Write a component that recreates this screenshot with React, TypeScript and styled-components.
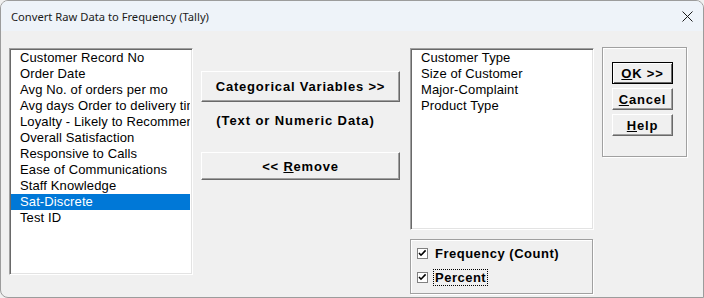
import React from "react";
import styled, { createGlobalStyle } from "styled-components";

const GlobalStyle = createGlobalStyle`
  html, body {
    margin: 0;
    padding: 0;
    background: #f0f0f0;
  }
  * {
    box-sizing: border-box;
  }
`;

const Window = styled.div`
  width: 704px;
  height: 298px;
  border: 1px solid #9c9c9c;
  border-radius: 8px 8px 0 8px;
  background: #f0f0f0;
  overflow: hidden;
  display: flex;
  flex-direction: column;
`;

const TitleBar = styled.div`
  height: 30px;
  flex: none;
  display: flex;
  align-items: center;
  justify-content: space-between;
  padding: 0 10px 0 10px;
  background: #eef3f9;
  font-family: "Noto Sans", "Open Sans", sans-serif;
  font-size: 11.2px;
  color: #1a1a1a;
`;

const Content = styled.div`
  flex: 1;
  display: flex;
  align-items: flex-start;
  padding: 17px 0 0 8px;
  font-family: "Liberation Sans", Arial, sans-serif;
  font-size: 13px;
  color: #000;
`;

const ListBox = styled.div<{ $h: number }>`
  width: 184px;
  height: ${(p) => p.$h}px;
  flex: none;
  background: #fff;
  border-top: 1px solid #a0a0a0;
  border-left: 1px solid #a0a0a0;
  border-bottom: 1px solid #fff;
  border-right: 1px solid #fff;
  box-shadow: inset 1px 1px 0 #696969, inset -1px -1px 0 #e3e3e3;
  padding: 1px 2px 1px 1px;
  overflow: hidden;
`;

const ListItem = styled.div<{ $selected?: boolean }>`
  height: 16px;
  line-height: 16px;
  padding-left: 9px;
  letter-spacing: 0.12px;
  white-space: nowrap;
  overflow: hidden;
  background: ${(p) => (p.$selected ? "#0078d7" : "transparent")};
  color: ${(p) => (p.$selected ? "#fff" : "#000")};
`;

const MiddleColumn = styled.div`
  width: 199px;
  margin-left: 8px;
  padding-top: 23px;
  display: flex;
  flex-direction: column;
  flex: none;
`;

const Button = styled.div<{ $h: number; $default?: boolean }>`
  height: ${(p) => p.$h}px;
  display: flex;
  align-items: center;
  justify-content: center;
  background: #f0f0f0;
  font-weight: bold;
  font-size: 13px;
  letter-spacing: 0.8px;
  border-top: 1px solid ${(p) => (p.$default ? "#000" : "#fff")};
  border-left: 1px solid ${(p) => (p.$default ? "#000" : "#fff")};
  border-bottom: 1px solid ${(p) => (p.$default ? "#000" : "#696969")};
  border-right: 1px solid ${(p) => (p.$default ? "#000" : "#696969")};
  box-shadow: ${(p) =>
    p.$default
      ? "inset 1px 1px 0 #fff, inset -1px -1px 0 #696969"
      : "inset -1px -1px 0 #a0a0a0"};
  white-space: nowrap;
`;

const Note = styled.div`
  font-weight: bold;
  letter-spacing: 0.9px;
  text-align: center;
  line-height: 16px;
  margin: 11px 10px 23px 0;
`;

const RightColumn = styled.div`
  width: 183px;
  margin-left: 10px;
  display: flex;
  flex-direction: column;
  flex: none;
`;

const OptionsBox = styled.div`
  margin-top: 9px;
  height: 55px;
  border: 1px solid #a0a0a0;
  box-shadow: inset 1px 1px 0 #fff, 1px 1px 0 #fff;
  padding: 5px 0 0 6px;
  display: flex;
  flex-direction: column;
  gap: 8px;
`;

const CheckRow = styled.div`
  display: flex;
  align-items: center;
  height: 16px;
  font-weight: bold;
  letter-spacing: 0.5px;
`;

const CheckBox = styled.span`
  width: 11px;
  height: 11px;
  background: #fff;
  border: 1px solid #808080;
  margin-right: 6px;
  display: flex;
  align-items: center;
  justify-content: center;
`;

const Label = styled.span<{ $focus?: boolean }>`
  padding: 0 1px;
  line-height: 15px;
  outline: ${(p) => (p.$focus ? "1px dotted #000" : "none")};
`;

const ButtonBox = styled.div`
  width: 85px;
  height: 110px;
  margin-left: 9px;
  margin-top: -1px;
  flex: none;
  border: 1px solid #a0a0a0;
  box-shadow: inset 1px 1px 0 #fff, 1px 1px 0 #fff;
  padding: 14px 0 0 9px;
  display: flex;
  flex-direction: column;
  gap: 4px;
`;

const SideButton = styled(Button)`
  width: 61px;
`;

const Check = () => (
  <svg width="9" height="9" viewBox="0 0 9 9">
    <path d="M1 4 L3 6.2 L7.6 1.4" fill="none" stroke="#000" strokeWidth="1.6" />
  </svg>
);

const CloseIcon = () => (
  <svg width="11" height="11" viewBox="0 0 11 11">
    <path d="M0.5 0.5 L10.5 10.5 M10.5 0.5 L0.5 10.5" stroke="#1a1a1a" strokeWidth="1" />
  </svg>
);

const sourceVars = [
  "Customer Record No",
  "Order Date",
  "Avg No. of orders per mo",
  "Avg days Order to delivery time",
  "Loyalty - Likely to Recommend",
  "Overall Satisfaction",
  "Responsive to Calls",
  "Ease of Communications",
  "Staff Knowledge",
  "Sat-Discrete",
  "Test ID",
];

const chosenVars = ["Customer Type", "Size of Customer", "Major-Complaint", "Product Type"];

const App = () => {
  return (
    <>
      <GlobalStyle />
      <Window>
        <TitleBar>
          <span>Convert Raw Data to Frequency (Tally)</span>
          <CloseIcon />
        </TitleBar>
        <Content>
          <ListBox $h={227}>
            {sourceVars.map((v) => (
              <ListItem key={v} $selected={v === "Sat-Discrete"}>
                {v}
              </ListItem>
            ))}
          </ListBox>
          <MiddleColumn>
            <Button $h={31}>Categorical Variables &gt;&gt;</Button>
            <Note>(Text or Numeric Data)</Note>
            <Button $h={28}>
              &lt;&lt;&nbsp;<u>R</u>emove
            </Button>
          </MiddleColumn>
          <RightColumn>
            <ListBox $h={182}>
              {chosenVars.map((v) => (
                <ListItem key={v}>{v}</ListItem>
              ))}
            </ListBox>
            <OptionsBox>
              <CheckRow>
                <CheckBox>
                  <Check />
                </CheckBox>
                <Label>Frequency (Count)</Label>
              </CheckRow>
              <CheckRow>
                <CheckBox>
                  <Check />
                </CheckBox>
                <Label $focus>Percent</Label>
              </CheckRow>
            </OptionsBox>
          </RightColumn>
          <ButtonBox>
            <SideButton $h={22} $default>
              <u>O</u>K &gt;&gt;
            </SideButton>
            <SideButton $h={22}>
              <u>C</u>ancel
            </SideButton>
            <SideButton $h={22}>
              <u>H</u>elp
            </SideButton>
          </ButtonBox>
        </Content>
      </Window>
    </>
  );
};

export default App;
